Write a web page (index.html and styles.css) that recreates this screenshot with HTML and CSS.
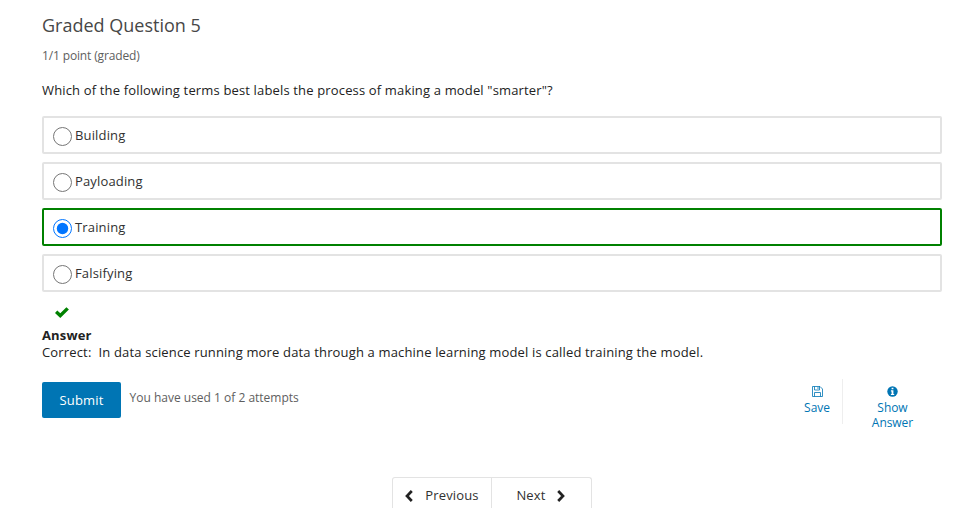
FILE: index.html
```html
<!DOCTYPE html>
<html lang="en">
<head>
<meta charset="utf-8">
<title>Graded Question 5</title>
<link rel="stylesheet" href="styles.css">
</head>
<body>
<main class="problem">
  <h3 class="title">Graded Question 5</h3>
  <div class="progress">1/1 point (graded)</div>
  <p class="question">Which of the following terms best labels the process of making a model "smarter"?</p>
  <div class="choices">
    <label class="choice"><input type="radio" name="q"><span>Building</span></label>
    <label class="choice"><input type="radio" name="q"><span>Payloading</span></label>
    <label class="choice correct"><input type="radio" name="q" checked><span>Training</span></label>
    <label class="choice"><input type="radio" name="q"><span>Falsifying</span></label>
  </div>
  <svg class="check" viewBox="0 0 14 11"><path d="M0 5.9 L2.3 3.5 L5.3 6.2 L11.4 .2 L13.9 2.6 L5.3 11Z"/></svg>
  <div class="answer"><strong>Answer</strong><span>Correct:&nbsp; In data science running more data through a machine learning model is called training the model.</span></div>
  <div class="actions">
    <button class="submit">Submit</button>
    <span class="attempts">You have used 1 of 2 attempts</span>
    <div class="tools">
      <button class="tool save">
        <svg viewBox="0 0 11 11"><path d="M.5 .5H8L10.5 3V10.5H.5ZM2.5 .5V4H7.5V.5M2.5 10.5V6.5H8.5V10.5M6 1V3" fill="none" stroke="currentColor" stroke-width=".8"/></svg>
        <span>Save</span>
      </button>
      <button class="tool show">
        <svg viewBox="0 0 11 11"><circle cx="5.5" cy="5.5" r="5.2" fill="currentColor"/><path d="M4.6 1.7H6.4V3.3H4.6ZM3.9 4.3H6.4V7.9H7.2V9.1H3.9V7.9H4.6V5.4H3.9Z" fill="#fff"/></svg>
        <span>Show<br>Answer</span>
      </button>
    </div>
  </div>
</main>
<nav class="pager">
  <button class="page previous"><svg viewBox="0 0 8 12"><path d="M6.8 1 L2 6 L6.8 11"/></svg><span>Previous</span></button>
  <button class="page next"><span>Next</span><svg viewBox="0 0 8 12"><path d="M1.2 1 L6 6 L1.2 11"/></svg></button>
</nav>
</body>
</html>
```
FILE: styles.css
```css
* { box-sizing: border-box; }
body {
  margin: 0;
  height: 508px;
  overflow: hidden;
  background: #fff;
  color: #222;
  font: 13px/17px "Open Sans", sans-serif;
  letter-spacing: .155px;
}
button { font: inherit; letter-spacing: inherit; background: none; border: 0; padding: 0; margin: 0; white-space: nowrap; }
.problem { width: 900px; margin-left: 42px; padding-top: 13px; }
.title { margin: 0; font-size: 18px; line-height: 24px; font-weight: 400; color: #474747; letter-spacing: 0; }
.progress { margin-top: 10px; font-size: 12px; color: #5e5e5e; letter-spacing: -.14px; }
.question { margin: 18px 0 17px; }
.choices { display: flex; flex-direction: column; gap: 8px; color: #313131; }
.choice {
  display: flex;
  align-items: center;
  height: 38px;
  border: 2px solid #e3e3e3;
  border-radius: 2px;
  padding-left: 9px;
}
.choice.correct { border-color: #008100; }
.choice input { width: 19px; height: 19px; margin: 3px 3px 0 0; }
.check { display: block; width: 14px; height: 11px; margin: 15px 0 0 13px; fill: #008100; }
.answer { display: flex; flex-direction: column; margin-top: 9px; }
.actions { display: flex; margin-top: 21px; height: 46px; }
.submit { width: 79px; height: 36px; background: #0075b4; color: #fff; border-radius: 2px; }
.attempts { margin: 7px 0 0 8.5px; font-size: 12px; color: #5e5e5e; letter-spacing: 0; }
.tools { display: flex; margin: -3px 0 0 auto; }
.tool { display: flex; flex-direction: column; align-items: center; color: #0075b4; font-size: 12px; line-height: 15px; letter-spacing: -.05px; padding-top: 7px; }
.tool svg { width: 11px; height: 11px; margin-bottom: 3px; }
.save { width: 51px; border-right: 1px solid #eee; height: 45px; }
.show { width: 99px; height: 52px; }
.pager { display: flex; width: 200px; margin: 49px 0 0 392px; border: 1px solid #e3e3e3; border-bottom: 0; border-radius: 3px 3px 0 0; height: 36px; }
.page { display: flex; align-items: center; justify-content: center; gap: 12px; color: #313131; }
.previous { width: 98px; }
.next { width: 100px; padding-right: 2px; border-left: 1px solid #e3e3e3; gap: 11px; }
.page svg { width: 8px; height: 12px; fill: none; stroke: #222; stroke-width: 2.7; }
```
